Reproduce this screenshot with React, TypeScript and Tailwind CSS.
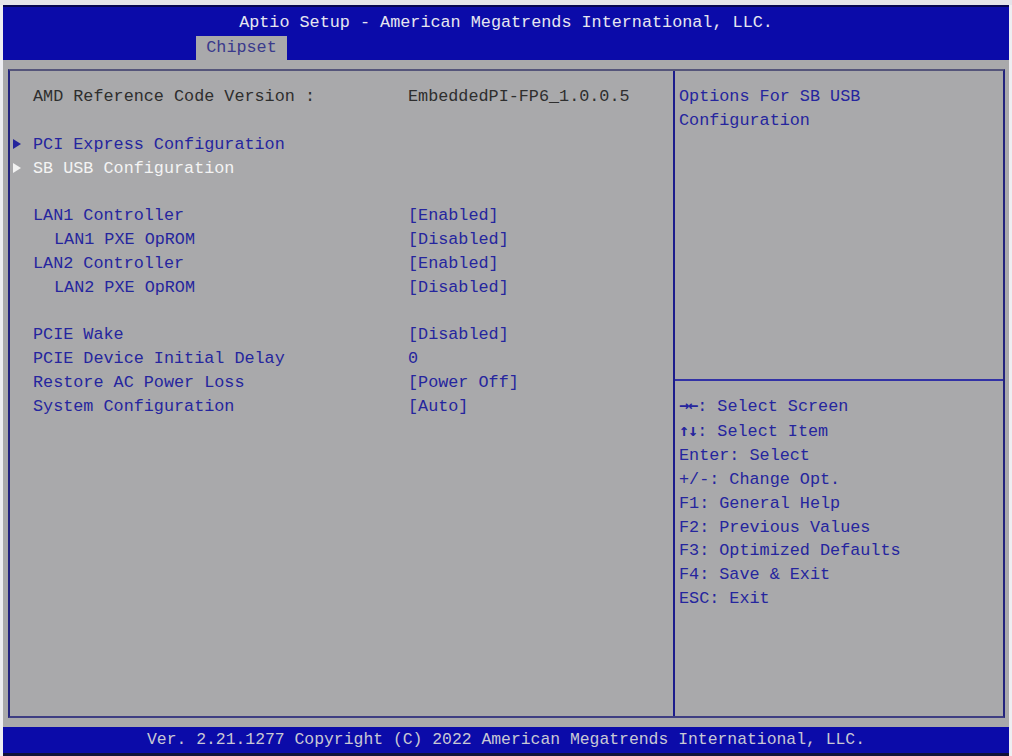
const font = { fontFamily: '"Liberation Mono", "DejaVu Sans Mono", monospace' }

type Row = {
  label?: string
  value?: string
  indent?: boolean
  submenu?: boolean
  selected?: boolean
  dark?: boolean
}

const rows: Row[] = [
  { label: 'AMD Reference Code Version :', value: 'EmbeddedPI-FP6_1.0.0.5', dark: true },
  {},
  { label: 'PCI Express Configuration', submenu: true },
  { label: 'SB USB Configuration', submenu: true, selected: true },
  {},
  { label: 'LAN1 Controller', value: '[Enabled]' },
  { label: 'LAN1 PXE OpROM', value: '[Disabled]', indent: true },
  { label: 'LAN2 Controller', value: '[Enabled]' },
  { label: 'LAN2 PXE OpROM', value: '[Disabled]', indent: true },
  {},
  { label: 'PCIE Wake', value: '[Disabled]' },
  { label: 'PCIE Device Initial Delay', value: '0' },
  { label: 'Restore AC Power Loss', value: '[Power Off]' },
  { label: 'System Configuration', value: '[Auto]' },
]

// first two keys use arrow glyphs, drawn a bit heavier like the firmware font
const keys: [string, string][] = [
  ['\u2192\u2190', ': Select Screen'],
  ['\u2191\u2193', ': Select Item'],
  ['', 'Enter: Select'],
  ['', '+/-: Change Opt.'],
  ['', 'F1: General Help'],
  ['', 'F2: Previous Values'],
  ['', 'F3: Optimized Defaults'],
  ['', 'F4: Save & Exit'],
  ['', 'ESC: Exit'],
]

const Arrow = ({ white }: { white?: boolean }) => (
  <svg width="8" height="10" viewBox="0 0 8 10" className="ml-[3px]">
    <polygon points="0,0 8,5 0,10" fill={white ? '#f2f2f2' : '#24249c'} />
  </svg>
)

const SetupRow = ({ row }: { row: Row }) => {
  const color = row.selected ? 'text-[#f4f4f4]' : row.dark ? 'text-[#2e2e2e]' : 'text-[#25259e]'
  return (
    <div className="flex h-[23.8px] items-center whitespace-pre">
      <div className="w-[23px] flex items-center">{row.submenu && <Arrow white={row.selected} />}</div>
      <div className={`w-[375px] ${color} ${row.indent ? 'pl-[21px]' : ''}`}>{row.label}</div>
      <div className={row.dark ? 'text-[#2e2e2e]' : 'text-[#25259e]'}>{row.value}</div>
    </div>
  )
}

export default function App() {
  return (
    <div className="w-[1012px] h-[756px] bg-[#eeeef2] flex flex-col overflow-hidden text-[16.8px]" style={font}>
      <div className="h-[5px] bg-[#e4e4ea]" />
      <div className="h-[2px] mx-[3px] bg-[#060650]" />
      <div className="h-[53px] mx-[3px] bg-[#0b0ba9] flex flex-col">
        <div className="h-[29px] flex items-center justify-center text-[#e6e6f0] pt-[2px]">
          Aptio Setup - American Megatrends International, LLC.
        </div>
        <div className="flex pl-[193px]">
          <div className="h-[24px] w-[91px] bg-[#a9a9ab] text-[#3a3a8c] flex items-center justify-center">Chipset</div>
        </div>
      </div>
      <div className="h-[667px] mx-[3px] bg-[#a9a9ab] pt-[9px] pl-[5px] pr-[4px] pb-[9px]">
        <div className="h-full border-2 border-[#23237e] border-t-[#55557a] border-b-[#3e3e82] flex">
          <div className="w-[663px] pt-[14px]">
            {rows.map((r, i) => (
              <SetupRow key={i} row={r} />
            ))}
          </div>
          <div className="w-[2px] bg-[#1c1c8c]" />
          <div className="flex-1 flex flex-col">
            <div className="h-[308px] pt-[14px] pl-[4px] text-[#25259e] leading-[23.8px]">
              Options For SB USB
              <br />
              Configuration
            </div>
            <div className="h-[2px] bg-[#3232a6]" />
            <div className="pt-[13px] pl-[4px] text-[#25259e] leading-[23.9px] whitespace-pre">
              {keys.map(([glyph, text]) => (
                <div key={text}>
                  {glyph && (
                    <span className="font-bold tracking-[-1px]" style={{ fontFamily: '"DejaVu Sans Mono", monospace' }}>
                      {glyph}
                    </span>
                  )}
                  {text}
                </div>
              ))}
            </div>
          </div>
        </div>
      </div>
      <div className="h-[26px] mx-[3px] bg-[#0b0ba9] text-[#c8c8d4] flex items-center justify-center text-[16.4px]">
        Ver. 2.21.1277 Copyright (C) 2022 American Megatrends International, LLC.
      </div>
      <div className="flex-1 mx-[3px] bg-[#10103a]" />
    </div>
  )
}
